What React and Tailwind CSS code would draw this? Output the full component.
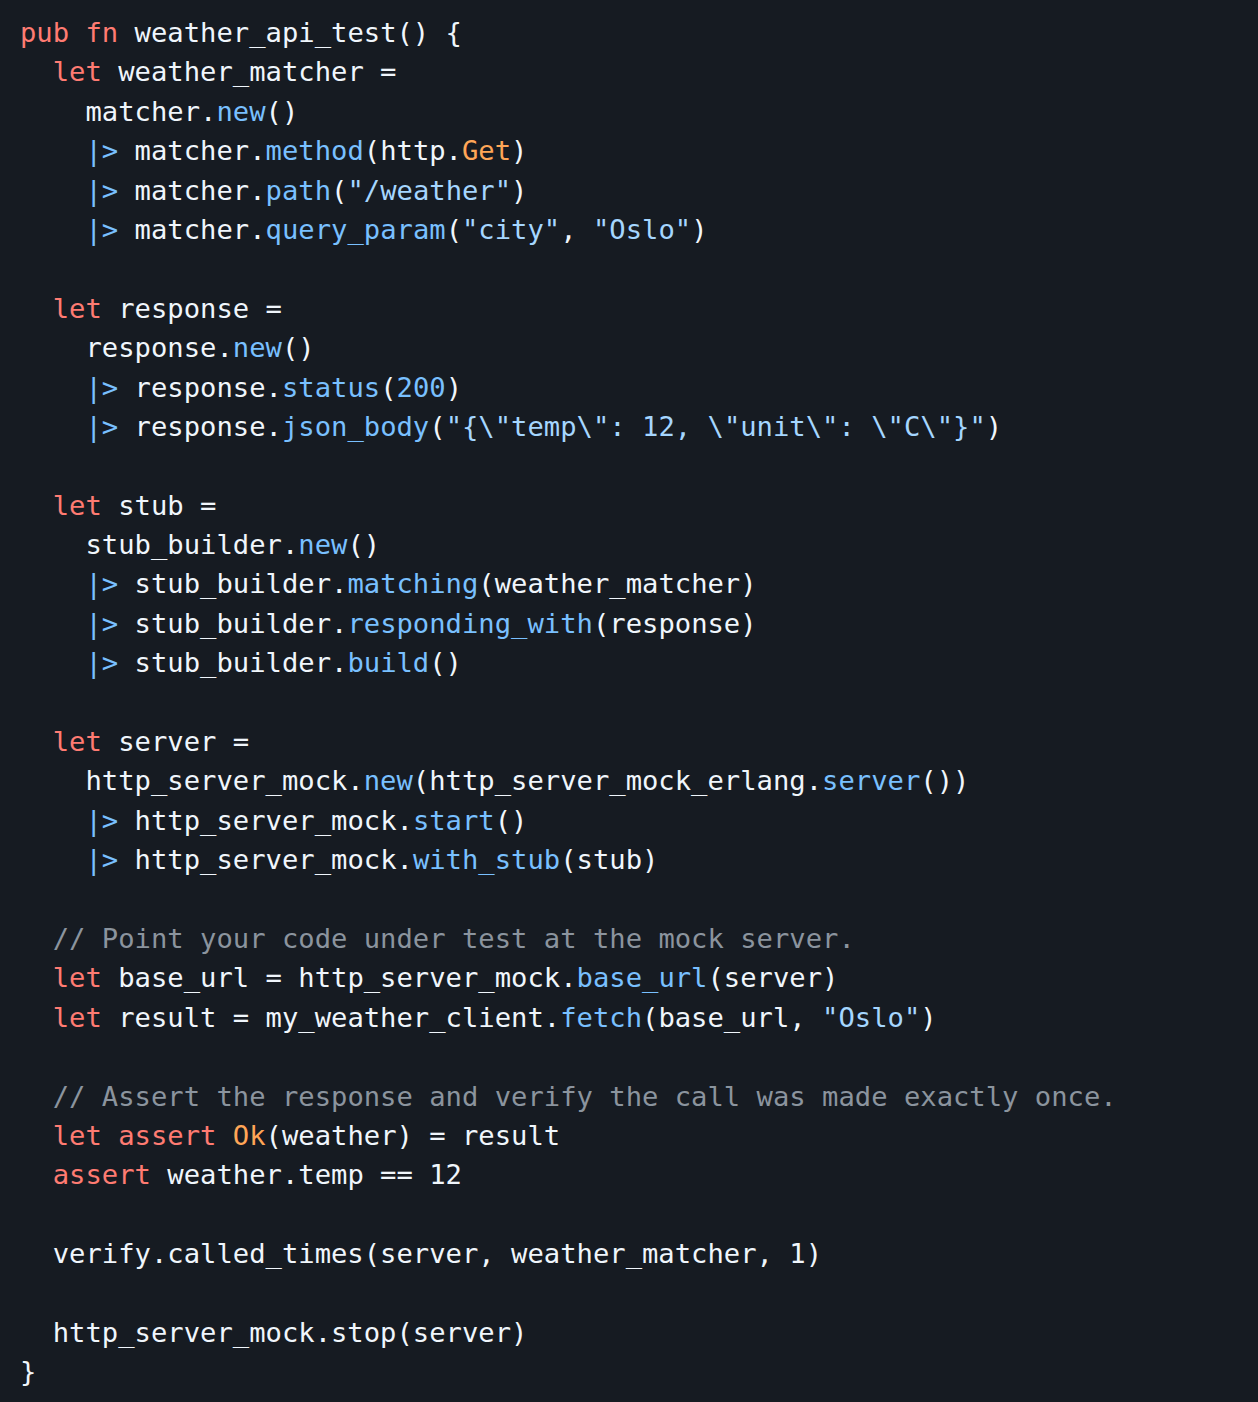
import React from "react";

const K = ({ children }) => <span className="text-[#ff7b72]">{children}</span>;
const F = ({ children }) => <span className="text-[#79c0ff]">{children}</span>;
const S = ({ children }) => <span className="text-[#a5d6ff]">{children}</span>;
const O = ({ children }) => <span className="text-[#ffa657]">{children}</span>;
const C = ({ children }) => <span className="text-[#8b949e]">{children}</span>;

const lines = [
  <><K>pub</K> <K>fn</K> weather_api_test() {"{"}</>,
  <>  <K>let</K> weather_matcher =</>,
  <>    matcher.<F>new</F>()</>,
  <>    <F>|&gt;</F> matcher.<F>method</F>(http.<O>Get</O>)</>,
  <>    <F>|&gt;</F> matcher.<F>path</F>(<S>"/weather"</S>)</>,
  <>    <F>|&gt;</F> matcher.<F>query_param</F>(<S>"city"</S>, <S>"Oslo"</S>)</>,
  <>{" "}</>,
  <>  <K>let</K> response =</>,
  <>    response.<F>new</F>()</>,
  <>    <F>|&gt;</F> response.<F>status</F>(<F>200</F>)</>,
  <>    <F>|&gt;</F> response.<F>json_body</F>(<S>{'"{\\"temp\\": 12, \\"unit\\": \\"C\\"}"'}</S>)</>,
  <>{" "}</>,
  <>  <K>let</K> stub =</>,
  <>    stub_builder.<F>new</F>()</>,
  <>    <F>|&gt;</F> stub_builder.<F>matching</F>(weather_matcher)</>,
  <>    <F>|&gt;</F> stub_builder.<F>responding_with</F>(response)</>,
  <>    <F>|&gt;</F> stub_builder.<F>build</F>()</>,
  <>{" "}</>,
  <>  <K>let</K> server =</>,
  <>    http_server_mock.<F>new</F>(http_server_mock_erlang.<F>server</F>())</>,
  <>    <F>|&gt;</F> http_server_mock.<F>start</F>()</>,
  <>    <F>|&gt;</F> http_server_mock.<F>with_stub</F>(stub)</>,
  <>{" "}</>,
  <>  <C>// Point your code under test at the mock server.</C></>,
  <>  <K>let</K> base_url = http_server_mock.<F>base_url</F>(server)</>,
  <>  <K>let</K> result = my_weather_client.<F>fetch</F>(base_url, <S>"Oslo"</S>)</>,
  <>{" "}</>,
  <>  <C>// Assert the response and verify the call was made exactly once.</C></>,
  <>  <K>let</K> <K>assert</K> <O>Ok</O>(weather) = result</>,
  <>  <K>assert</K> weather.temp == 12</>,
  <>{" "}</>,
  <>  verify.called_times(server, weather_matcher, 1)</>,
  <>{" "}</>,
  <>  http_server_mock.stop(server)</>,
  <>{"}"}</>,
];

export default function App() {
  return (
    <div className="w-[1258px] h-[1402px] bg-[#161b22] overflow-hidden">
      <pre
        className="m-0 pl-[20px] pt-[13px] text-[27.2px] leading-[39.4px] text-[#f0f6fc] whitespace-pre"
        style={{ fontFamily: '"DejaVu Sans Mono", "Liberation Mono", monospace' }}
      >
        {lines.map((l, i) => (
          <div key={i} className="h-[39.4px]">{l}</div>
        ))}
      </pre>
    </div>
  );
}
